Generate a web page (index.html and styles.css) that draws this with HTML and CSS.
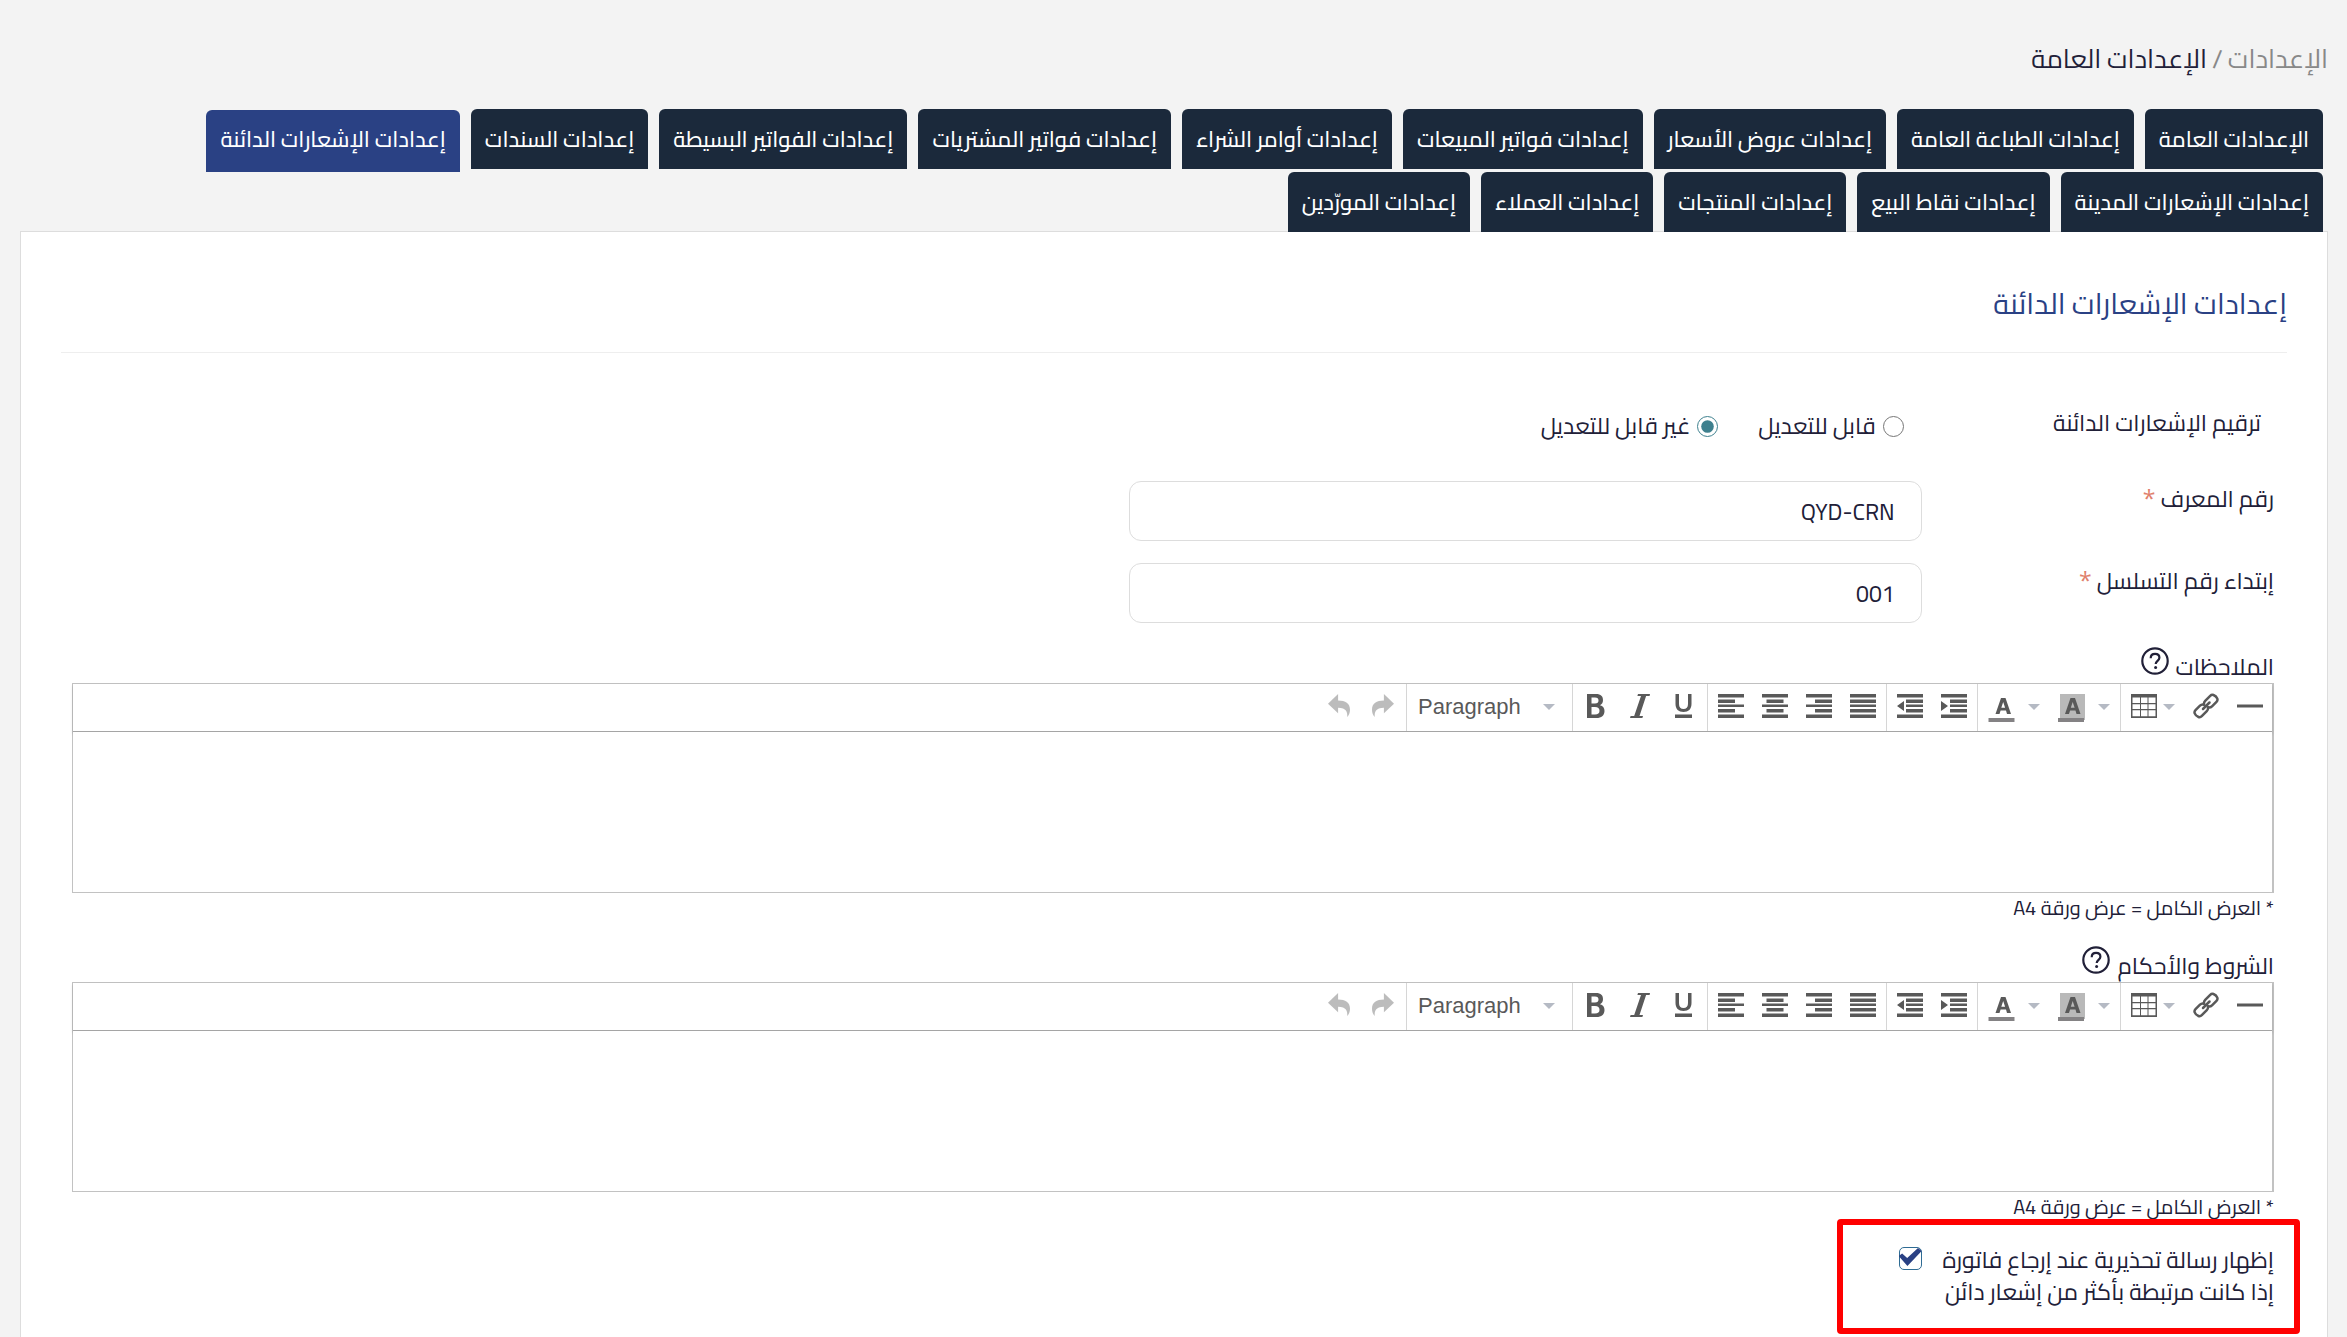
FILE: index.html
```
<!DOCTYPE html>
<html lang="ar" dir="rtl">
<head>
	<meta charset="utf-8">
	<title>إعدادات الإشعارات الدائنة</title>
	<link rel="stylesheet" href="styles.css">
</head>
<body>
	<!-- toolbar icons -->
	<svg class="icons_box" width="0" height="0">
		<symbol id="i-undo" viewBox="0 0 24 26"><path d="M11 0v7c8 0 13 3 13 10 0 3-1 6-3 8 .5-5-1-10-10-10v6L0 10.500z"/></symbol>
		<symbol id="i-redo" viewBox="0 0 24 26"><path d="M13 0v7C5 7 0 10 0 17c0 3 1 6 3 8-.5-5 1-10 10-10v6l11-10.500z"/></symbol>
		<symbol id="i-bold" viewBox="0 0 26 24"><path fill-rule="evenodd" d="M4 0h9c5 0 7 2.500 7 6 0 2.500-1 4.300-3 5.200 3 .8 4.500 2.800 4.500 5.800 0 4.500-3 7-8 7H4zM8.500 3.500v6H12c2.500 0 3.500-1 3.500-3s-1-3-3.500-3zM8.500 13v7.500H12c3 0 4.500-1.200 4.500-3.700S15 13 12 13z"/></symbol>
		<symbol id="i-italic" viewBox="0 0 26 24"><path d="M11 0h12l-.4 2h-3.500L12.500 22H16l-.6 2H3l.6-2h3.600L14 2h-3.600z"/></symbol>
		<symbol id="i-underline" viewBox="0 0 26 24"><path d="M4.500 0H8v10c0 3.500 1.600 5 4.500 5s4.500-1.500 4.500-5V0h3.500v10c0 5-3 8-8 8s-8-3-8-8zM4 20.500h17V24H4z"/></symbol>
		<symbol id="i-left" viewBox="0 0 26 24"><path d="M0 0h26v3.500H0zM0 5.500h17V9H0zM0 10.500h26V13H0zM0 15h17v3.500H0zM0 20.500h26V24H0z"/></symbol>
		<symbol id="i-center" viewBox="0 0 26 24"><path d="M0 0h26v3.500H0zM4.500 5.500h17V9h-17zM0 10.500h26V13H0zM4.500 15h17v3.500h-17zM0 20.500h26V24H0z"/></symbol>
		<symbol id="i-right" viewBox="0 0 26 24"><path d="M0 0h26v3.500H0zM9 5.500h17V9H9zM0 10.500h26V13H0zM9 15h17v3.500H9zM0 20.500h26V24H0z"/></symbol>
		<symbol id="i-justify" viewBox="0 0 26 24"><path d="M0 0h26v3.500H0zM0 5.500h26V9H0zM0 10.500h26V13H0zM0 15h26v3.500H0zM0 20.500h26V24H0z"/></symbol>
		<symbol id="i-outdent" viewBox="0 0 26 24"><path d="M0 0h26v3.500H0zM9 5.500h17V9H9zM9 10.500h17V13H9zM9 15h17v3.500H9zM0 20.500h26V24H0zM7 7v10L0 12z"/></symbol>
		<symbol id="i-indent" viewBox="0 0 26 24"><path d="M0 0h26v3.500H0zM9 5.500h17V9H9zM9 10.500h17V13H9zM9 15h17v3.500H9zM0 20.500h26V24H0zM0 7v10l7-5z"/></symbol>
		<symbol id="i-color" viewBox="0 0 26 28"><path fill-rule="evenodd" d="M12.500 4H17l5.500 16h-4l-1-3.500h-5.400L11 20H7zM14.700 8l-1.900 5.700h3.800z"/><path fill="#848284" d="M0 24h26v4H0z"/></symbol>
		<symbol id="i-bgcolor" viewBox="0 0 27 28"><path fill="#b9b9b9" d="M2 0h25v26H2z"/><path fill-rule="evenodd" d="M12.500 4H17l5.500 16h-4l-1-3.500h-5.400L11 20H7zM14.700 8l-1.900 5.700h3.800z"/><path fill="#848284" d="M0 24h26v4H0z"/></symbol>
		<symbol id="i-table" viewBox="0 0 26 24"><path fill-rule="evenodd" d="M0 0h26v24H0zM1.500 3.500V9H9V3.500zM10 3.500V9h6.500V3.500zM17.500 3.500V9h7V3.500zM1.500 10.200v4.900H9v-4.900zM10 10.200v4.900h6.500v-4.900zM17.500 10.200v4.900h7v-4.900zM1.500 16.300v6H9v-6zM10 16.300v6h6.500v-6zM17.500 16.300v6h7v-6z"/></symbol>
		<symbol id="i-link" viewBox="0 0 26 26"><g fill="none" stroke="#595959" stroke-width="2.500" stroke-linejoin="round" stroke-linecap="round"><path d="M10 16 16.500 9.500"/><path d="M11 11.500c-.2-1.500.2-2.700 1.200-3.700l5-5c1-1 2.200-1.300 3.300-.8 2 .8 3.200 2 3.800 3.600.4 1.100.2 2.200-.8 3.200l-4.500 4.500c-1.200 1.200-2.500 1.400-4 1"/><path d="M15 14.500c.2 1.500-.2 2.700-1.200 3.700l-5 5c-1 1-2.200 1.300-3.300.8-2-.8-3.200-2-3.800-3.600-.4-1.100-.2-2.200.8-3.200L7 12.700c1.200-1.200 2.500-1.400 4-1"/></g></symbol>
		<symbol id="i-line" viewBox="0 0 26 24"><path d="M0 10.500h26v3H0z"/></symbol>
		<symbol id="i-help" viewBox="0 0 28 28"><circle cx="14" cy="14" r="12.700" fill="none" stroke="#212038" stroke-width="2.200"/><path d="M9.700 11.200c0-2.700 1.800-4.300 4.400-4.300 2.500 0 4.300 1.500 4.300 3.800 0 3-3.700 3.300-3.700 6.300" fill="none" stroke="#212038" stroke-width="2.200"/><circle cx="14.600" cy="20.600" r="1.500" fill="#212038"/></symbol>
	</svg>

	<nav class="breadcrumb">
		<a href="#">الإعدادات</a>
		<span class="slash">/</span>
		<span>الإعدادات العامة</span>
	</nav>

	<ul class="tabs">
		<li><a href="#">الإعدادات العامة</a></li>
		<li><a href="#">إعدادات الطباعة العامة</a></li>
		<li><a href="#">إعدادات عروض الأسعار</a></li>
		<li><a href="#">إعدادات فواتير المبيعات</a></li>
		<li><a href="#">إعدادات أوامر الشراء</a></li>
		<li><a href="#">إعدادات فواتير المشتريات</a></li>
		<li><a href="#">إعدادات الفواتير البسيطة</a></li>
		<li><a href="#">إعدادات السندات</a></li>
		<li class="active"><a href="#">إعدادات الإشعارات الدائنة</a></li>
		<li><a href="#">إعدادات الإشعارات المدينة</a></li>
		<li><a href="#">إعدادات نقاط البيع</a></li>
		<li><a href="#">إعدادات المنتجات</a></li>
		<li><a href="#">إعدادات العملاء</a></li>
		<li><a href="#">إعدادات المورّدين</a></li>
	</ul>

	<main class="card">
		<h1>إعدادات الإشعارات الدائنة</h1>
		<form>
			<div class="row radio_row">
				<span class="label" id="numbering">ترقيم الإشعارات الدائنة</span>
				<div class="radios" role="radiogroup" aria-labelledby="numbering">
					<label><input type="radio" name="edit"> قابل للتعديل</label>
					<label><input type="radio" name="edit" checked> غير قابل للتعديل</label>
				</div>
			</div>
			<div class="row">
				<label class="label" for="prefix">رقم المعرف <b>*</b></label>
				<input class="text" type="text" id="prefix" value="QYD-CRN">
			</div>
			<div class="row">
				<label class="label" for="start">إبتداء رقم التسلسل <b>*</b></label>
				<input class="text" type="text" id="start" value="001">
			</div>

			<div class="field">
				<label for="notes">الملاحظات <svg><use href="#i-help"/></svg></label>
				<div class="editor">
					<div class="toolbar" dir="ltr">
						<div class="group">
							<button type="button" class="off"><svg class="arrow"><use href="#i-undo"/></svg></button>
							<button type="button" class="off"><svg class="arrow"><use href="#i-redo"/></svg></button>
						</div>
						<div class="group">
							<button type="button" class="format">Paragraph <i class="caret"></i></button>
						</div>
						<div class="group">
							<button type="button"><svg><use href="#i-bold"/></svg></button>
							<button type="button"><svg><use href="#i-italic"/></svg></button>
							<button type="button"><svg><use href="#i-underline"/></svg></button>
						</div>
						<div class="group">
							<button type="button"><svg><use href="#i-left"/></svg></button>
							<button type="button"><svg><use href="#i-center"/></svg></button>
							<button type="button"><svg><use href="#i-right"/></svg></button>
							<button type="button"><svg><use href="#i-justify"/></svg></button>
						</div>
						<div class="group">
							<button type="button"><svg><use href="#i-outdent"/></svg></button>
							<button type="button"><svg><use href="#i-indent"/></svg></button>
						</div>
						<div class="group">
							<button type="button"><svg class="tall"><use href="#i-color"/></svg></button>
							<button type="button" class="open"><i class="caret"></i></button>
							<button type="button"><svg class="tall"><use href="#i-bgcolor"/></svg></button>
							<button type="button" class="open"><i class="caret"></i></button>
						</div>
						<div class="group">
							<button type="button" class="table"><svg><use href="#i-table"/></svg><i class="caret"></i></button>
							<button type="button"><svg class="chain"><use href="#i-link"/></svg></button>
							<button type="button"><svg><use href="#i-line"/></svg></button>
						</div>
					</div>
					<textarea id="notes"></textarea>
				</div>
				<p class="hint">* العرض الكامل = عرض ورقة A4</p>
			</div>

			<div class="field">
				<label for="terms">الشروط والأحكام <svg><use href="#i-help"/></svg></label>
				<div class="editor">
					<div class="toolbar" dir="ltr">
						<div class="group">
							<button type="button" class="off"><svg class="arrow"><use href="#i-undo"/></svg></button>
							<button type="button" class="off"><svg class="arrow"><use href="#i-redo"/></svg></button>
						</div>
						<div class="group">
							<button type="button" class="format">Paragraph <i class="caret"></i></button>
						</div>
						<div class="group">
							<button type="button"><svg><use href="#i-bold"/></svg></button>
							<button type="button"><svg><use href="#i-italic"/></svg></button>
							<button type="button"><svg><use href="#i-underline"/></svg></button>
						</div>
						<div class="group">
							<button type="button"><svg><use href="#i-left"/></svg></button>
							<button type="button"><svg><use href="#i-center"/></svg></button>
							<button type="button"><svg><use href="#i-right"/></svg></button>
							<button type="button"><svg><use href="#i-justify"/></svg></button>
						</div>
						<div class="group">
							<button type="button"><svg><use href="#i-outdent"/></svg></button>
							<button type="button"><svg><use href="#i-indent"/></svg></button>
						</div>
						<div class="group">
							<button type="button"><svg class="tall"><use href="#i-color"/></svg></button>
							<button type="button" class="open"><i class="caret"></i></button>
							<button type="button"><svg class="tall"><use href="#i-bgcolor"/></svg></button>
							<button type="button" class="open"><i class="caret"></i></button>
						</div>
						<div class="group">
							<button type="button" class="table"><svg><use href="#i-table"/></svg><i class="caret"></i></button>
							<button type="button"><svg class="chain"><use href="#i-link"/></svg></button>
							<button type="button"><svg><use href="#i-line"/></svg></button>
						</div>
					</div>
					<textarea id="terms"></textarea>
				</div>
				<p class="hint">* العرض الكامل = عرض ورقة A4</p>
			</div>

			<div class="row check_row">
				<label for="warn">إظهار رسالة تحذيرية عند إرجاع فاتورة<br>إذا كانت مرتبطة بأكثر من إشعار دائن</label>
				<input type="checkbox" id="warn" checked>
				<div class="marker"></div>
			</div>
		</form>
	</main>
</body>
</html>
```
FILE: styles.css
```
*{box-sizing: border-box; margin: 0; padding: 0}
ul,li{list-style: none;}
a{text-decoration: none; color: inherit}
body{min-height: 100vh; display: flex; flex-direction: column; padding: 40px 19px 0 20px; background-color: #f3f3f3; color: #212038; font: 23px/32px Cairo, "DejaVu Sans", sans-serif;}
input,button,textarea{font: inherit; color: inherit}
.icons_box{position: absolute;}

/*面包屑*/
.breadcrumb{display: flex; gap: 5px; font-size: 26px; line-height: 38px; height: 69px;}
.breadcrumb a{color: #888}
.breadcrumb .slash{color: #888}

.tabs{display: flex; flex-wrap: wrap; align-items: flex-start; column-gap: 11px; padding-right: 5px; margin-bottom: -1px; position: relative; z-index: 1; font-size: 22px;}
.tabs a{display: block; height: 60px; padding: 0 14px; border-radius: 6px 6px 0 0; background-color: #1b293b; color: #fff; font-weight: 500; line-height: 60px;}
.tabs .active a{height: 62px; margin-top: 1px; line-height: 58px; background-color: #2a4184;}

.card{flex: 1; padding: 51px 40px 0; border: 1px solid #ddd; border-bottom: 0; background-color: #fff;}
h1{padding-bottom: 27px; border-bottom: 1px solid #eee; color: #2a4184; font-size: 29px; font-weight: 400; line-height: 42px;}
form{padding: 51px 13px 0 11px;}

.row{display: grid; grid-template-columns: 16% 36%; margin-bottom: 22px; position: relative;}
.row .label{padding-top: 2px;}
.row b{color: #e0806c; font-family: "Open Sans", sans-serif; font-weight: 400; line-height: 1;}
.radio_row{margin-bottom: 33px;}
.radio_row .label{padding: 3px 13px 0 0;}
.radios{display: flex; gap: 40px; height: 44px; padding-right: 18px;}
.radios label{display: flex; align-items: center; gap: 7px;}
.radios input{width: 21px; height: 21px; accent-color: #3e808e;}
.text{height: 60px; padding: 0 26px; border: 1px solid #ddd; border-radius: 12px; background-color: #fff;}

/*编辑器*/
.field{margin-top: 24px;}
.field > label{display: flex; gap: 7px; height: 36px; padding-top: 4px;}
.field > label svg{width: 28px; height: 28px; margin-top: -4px;}
.editor{border: 1px solid #c2c2c2; border-right-width: 2px;}
.toolbar{display: flex; justify-content: flex-end; height: 48px; border-bottom: 1px solid #a5a5a5; box-shadow: 0 2px 3px rgba(0,0,0,.15); font: 22px "Liberation Sans", sans-serif; color: #595959;}
.group{display: flex; padding: 0 1px; border-left: 1px solid #d6d6d6;}
.group:first-child{border-left: 0}
.group:last-child{padding-right: 0}
.toolbar button{display: flex; align-items: center; justify-content: center; width: 44px; height: 46px; border: 0; background: none;}
.toolbar svg{width: 26px; height: 24px; margin-bottom: 3px; fill: #595959;}
.toolbar .arrow{width: 22px; height: 26px;}
.toolbar .chain{height: 26px;}
.toolbar .tall{width: 27px; height: 28px; margin: 2px 0 0;}
.toolbar .off{opacity: .4}
.toolbar .format{width: 163px; padding: 0 16px 0 10px; justify-content: space-between;}
.toolbar .open{width: 26px; padding-right: 4px;}
.toolbar .table{width: 62px; gap: 6px;}
.caret{border: 6px solid transparent; border-top-color: #b5bac4; border-bottom: 0;}
textarea{display: block; width: 100%; height: 160px; padding: 12px; border: 0; outline: 0; resize: none;}
.hint{font-size: 20px; line-height: 29px;}

.check_row{margin: 23px 0 0;}
.check_row input{appearance: none; width: 23px; height: 23px; margin-top: 3px; border: 1px solid #2f6c94; border-radius: 5px;}
.check_row input:checked::before{content: ""; display: block; width: 23px; height: 18px; margin-right: -1px; background-color: #2a4184; clip-path: polygon(0 45%, 15% 31%, 37% 55%, 84% 0, 100% 16%, 38% 100%);}
/*红框*/
.marker{position: absolute; top: -25px; right: -26px; width: 463px; height: 115px; border: 6px solid #f00; border-radius: 4px;}
```
